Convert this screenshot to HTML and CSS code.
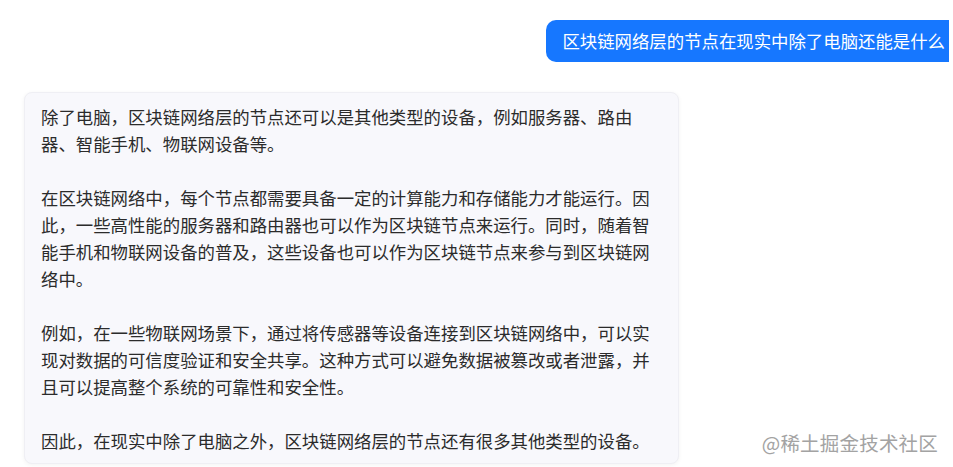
FILE: index.html
```html
<!DOCTYPE html>
<html lang="zh-CN">
<head>
  <meta charset="UTF-8">
  <title>区块链网络层的节点</title>
  <link rel="stylesheet" href="styles.css">
</head>
<body>
  <div class="chat">
    <div class="row user-row">
      <div class="bubble user">区块链网络层的节点在现实中除了电脑还能是什么</div>
    </div>

    <div class="row bot-row">
      <div class="bubble bot">
        <p>除了电脑，区块链网络层的节点还可以是其他类型的设备，例如服务器、路由器、智能手机、物联网设备等。</p>
        <p>在区块链网络中，每个节点都需要具备一定的计算能力和存储能力才能运行。因此，一些高性能的服务器和路由器也可以作为区块链节点来运行。同时，随着智能手机和物联网设备的普及，这些设备也可以作为区块链节点来参与到区块链网络中。</p>
        <p>例如，在一些物联网场景下，通过将传感器等设备连接到区块链网络中，可以实现对数据的可信度验证和安全共享。这种方式可以避免数据被篡改或者泄露，并且可以提高整个系统的可靠性和安全性。</p>
        <p>因此，在现实中除了电脑之外，区块链网络层的节点还有很多其他类型的设备。</p>
      </div>
    </div>
  </div>

  <div class="watermark">@稀土掘金技术社区</div>
</body>
</html>
```

FILE: styles.css
```css
body {
  margin: 0;
  background-color: #fff;
  font-family: "Microsoft YaHei", "Noto Sans CJK SC", "Noto Sans", sans-serif;
  color: #2b2b2b;
  height: 467px;
  overflow: hidden;
  position: relative;
}

.chat {
  display: flex;
  flex-direction: column;
  gap: 30px;
  padding: 20px 4px 0 24px;
}

.row {
  display: flex;
}

.user-row {
  justify-content: flex-end;
}

.bubble {
  font-size: 17.4px;
  line-height: 27px;
}

.user {
  background-color: #1677ff;
  color: #fff;
  height: 42px;
  line-height: 42px;
  padding: 0 4px 0 16px;
  border-radius: 10px 0 0 10px;
}

.bot {
  width: 621px;
  padding: 10px 16px 9px;
  background-color: #f8f8fc;
  border: 1px solid #efeff4;
  border-radius: 8px;
  box-shadow: 0 1px 4px rgba(0, 0, 0, 0.05);
}

.bot p {
  margin: 0 0 27px;
}

.bot p:last-child {
  margin-bottom: 0;
}

.watermark {
  position: absolute;
  right: 15px;
  top: 428px;
  font-size: 19.5px;
  color: #a3a3a3;
  letter-spacing: 0.2px;
  text-shadow: 0 0 1px #fff;
}
```
